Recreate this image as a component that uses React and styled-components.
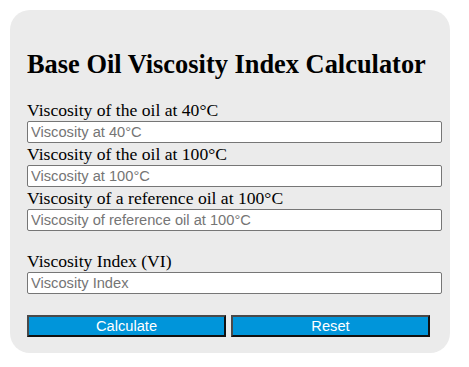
import React from 'react';
import styled, { createGlobalStyle } from 'styled-components';

const GlobalStyle = createGlobalStyle`
  body {
    margin: 0;
    padding: 10px;
    background: #ffffff;
    font-family: "Liberation Serif", "Times New Roman", serif;
  }
`;

const Card = styled.div`
  box-sizing: border-box;
  width: 440px;
  padding: 40px 8px 16px 17px;
  background-color: #ebebeb;
  border-radius: 20px;
`;

const Title = styled.h2`
  margin: 0 0 22px 0;
  font-size: 26.4px;
  line-height: 28px;
  font-weight: bold;
  color: #000;
`;

const Label = styled.label`
  display: block;
  margin: ${props => (props.spaced ? '20px 0 1px' : '1px 0 1px')};
  font-size: 17.6px;
  line-height: 20px;
  color: #000;
`;

const Field = styled.input`
  display: block;
  box-sizing: border-box;
  width: 415px;
  height: 22px;
  margin: 0;
  padding: 0 3px;
  border: 1px solid #767676;
  border-radius: 2px;
  background: #fff;
  font-family: "Liberation Sans", Arial, sans-serif;
  font-size: 14.67px;
  color: #000;

  &::placeholder {
    color: #757575;
  }
`;

const ButtonRow = styled.div`
  display: flex;
  gap: 5px;
  margin-top: 21px;
`;

const Button = styled.button`
  box-sizing: border-box;
  width: 199px;
  height: 22px;
  padding: 0;
  background-color: #0095da;
  color: #fff;
  font-family: "Liberation Sans", Arial, sans-serif;
  font-size: 14.67px;
  border-style: solid;
  border-width: 2px;
  border-color: #4a4a4a #111 #111 #4a4a4a;
  cursor: pointer;
`;

const fields = [
  { label: 'Viscosity of the oil at 40°C', placeholder: 'Viscosity at 40°C' },
  { label: 'Viscosity of the oil at 100°C', placeholder: 'Viscosity at 100°C' },
  { label: 'Viscosity of a reference oil at 100°C', placeholder: 'Viscosity of reference oil at 100°C' },
];

export default function App() {
  return (
    <>
      <GlobalStyle />
      <Card>
        <Title>Base Oil Viscosity Index Calculator</Title>
        {fields.map((f, i) => (
          <div key={i}>
            <Label>{f.label}</Label>
            <Field type="text" placeholder={f.placeholder} />
          </div>
        ))}
        <Label spaced>Viscosity Index (VI)</Label>
        <Field type="text" placeholder="Viscosity Index" readOnly />
        <ButtonRow>
          <Button>Calculate</Button>
          <Button>Reset</Button>
        </ButtonRow>
      </Card>
    </>
  );
}
